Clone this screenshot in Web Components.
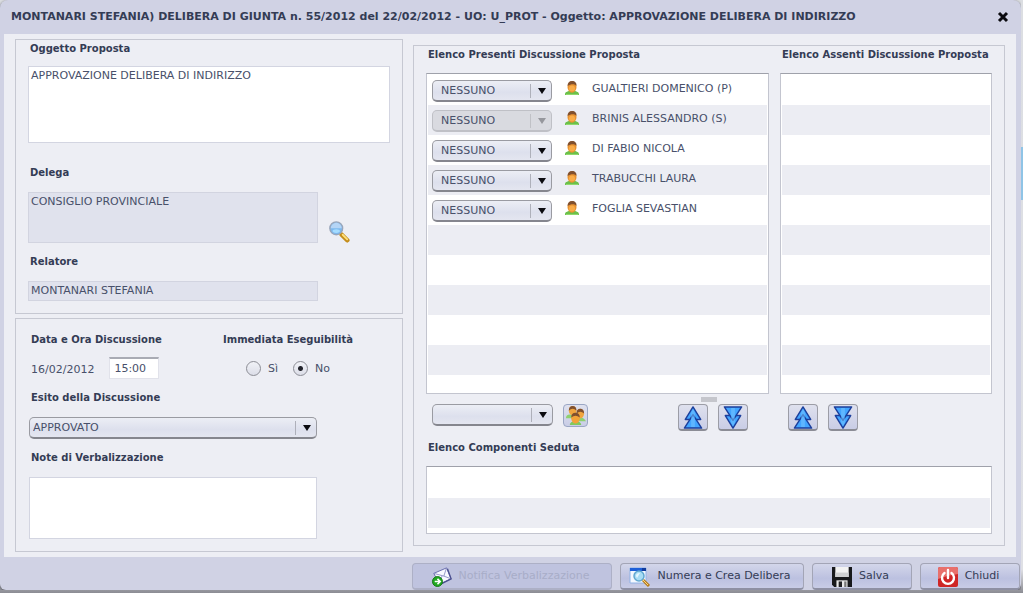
<!DOCTYPE html>
<html lang="it">
<head>
<meta charset="utf-8">
<title>Delibera di Giunta</title>
<style>
  html { min-height: 100%; background: linear-gradient(#8fc4e6, #8fc4e6) right 147px / 2px 53px no-repeat, linear-gradient(#dcdee2 0, #dfe0e5 96%, #8c8d94 100%); }
  body { margin: 0 2px 3px 0; font: 11px/14px "DejaVu Sans", Verdana, sans-serif; color: #48506a; }
</style>
</head>
<body>
<delibera-page></delibera-page>

<script>
const ICONS = {
  close: ['0 0 12 12', '<path d="M2 2l8 8M10 2l-8 8" stroke="#0b0b10" stroke-width="3"/>'],
  arrow: ['0 0 8 6', '<path d="M0 0h8L4 6z" fill="currentColor"/>'],
  search: ['0 0 24 24', '<path d="M15 15l6 6" stroke="#c48d1c" stroke-width="5" stroke-linecap="round"/><path d="M16 15l5 5" stroke="#ffe07c" stroke-width="2" stroke-linecap="round"/><circle cx="9" cy="8" r="7" fill="#7db8ee" stroke="#9aa6ba" stroke-width="1.500"/><path d="M3 8a6 6 0 0 1 12 0z" fill="#b5d5f6"/><ellipse cx="9" cy="11" rx="4" ry="2" fill="#a5dcff"/>'],
  person: ['0 0 14 14', '<path d="M0 14c0-3 1-3 4-4h6c3 1 4 1 4 4z" fill="#6cc04a"/><path d="M1 13.500h12" stroke="#8fd96c"/><ellipse cx="7" cy="6" rx="4.500" ry="5.800" fill="#e8922f"/><ellipse cx="7" cy="7.500" rx="3" ry="3" fill="#f9ad4a"/><path d="M2.600 5C2.400 2 4 0 7 0s5 2 4.400 5C10 2.500 6 2.500 2.600 5z" fill="#80502f"/>'],
  people: ['0 0 22 22', '<path d="M1 14q0-4 4-4h6v4H1zM12 17q0-4 4-4t6 4z" fill="#8ed070"/><ellipse cx="8" cy="6" rx="4" ry="5" fill="#f0a53f"/><path d="M4 6q0-5 4-5t4 5Q8 2 4 6z" fill="#80502f"/><ellipse cx="16" cy="9" rx="4" ry="5" fill="#f0a53f"/><path d="M12 9q0-5 4-5t4 5q-4-4-8 0z" fill="#80502f"/><path d="M5 21q0-4 6-4t6 4z" fill="#7fca5e"/><ellipse cx="11" cy="14" rx="4.500" ry="5.500" fill="#f2a238"/><path d="M6.500 13q0-5 4.500-5t4.500 5q-4.500-3.500-9 0z" fill="#80502f"/>'],
  up: ['0 0 20 24', '<g fill="#42a5ff" stroke="#1c3f9c" stroke-width="1.500" stroke-linejoin="round"><path d="M10 1l8 13H2z"/><path d="M10 9l9 14H1z"/></g><path d="M10 3l2 4v15H8V7z" fill="#7cc8ff" opacity=".5"/>'],
  down: ['0 0 20 24', '<g fill="#42a5ff" stroke="#1c3f9c" stroke-width="1.500" stroke-linejoin="round"><path d="M10 23L2 10h16z"/><path d="M10 15L1 1h18z"/></g><path d="M10 21l-2-4V2h4v15z" fill="#7cc8ff" opacity=".5"/>'],
  mail: ['0 0 22 22', '<path d="M2 7L16 1l5 12L8 19z" fill="#f8f8ff" stroke="#5f63a8"/><path d="M2 7l11 3 3-9M8 19l3-9M21 13l-8-3" fill="none" stroke="#8c90c4"/><path d="M17 2l4 11-12 6" fill="none" stroke="#4d5190" stroke-width="1.500"/><circle cx="6" cy="16" r="5.500" fill="#20a820" stroke="#117311"/><path d="M3 16h5M6 13l3 3-3 3" fill="none" stroke="#fff" stroke-width="1.800"/>'],
  window: ['0 0 22 20', '<path d="M1 1h16v15H1z" fill="#f3f8ff" stroke="#8fb2e6"/><path d="M1 1h16v3H1z" fill="#1d5fd8"/><path d="M13 1h4v3h-4z" fill="#123b9c"/><circle cx="10" cy="9" r="5" fill="#a8ddf5" stroke="#62a8d0" stroke-width="1.500"/><path d="M7 9q0-3 4-3l-3 5z" fill="#e6f7ff"/><path d="M14 13l6 6" stroke="#b57f22" stroke-width="3"/><path d="M14 13l5 5" stroke="#ffd67d"/>'],
  save: ['0 0 18 18', '<path d="M0 0h18v18H2l-2-2z" fill="#18191c"/><path d="M3 0h12v9H3z" fill="#f2f2f2"/><path d="M3 5h12v4H3z" fill="#cfd0d2"/><path d="M4 12h10v6H4z" fill="#e9e9e9"/><path d="M6 13h3v5H6z" fill="#202124"/><path d="M11 13h2v5h-2z" fill="#777"/>'],
  power: ['0 0 20 20', '<rect width="20" height="20" rx="2" fill="#cf2626"/><path d="M0 2q0-2 2-2h16q2 0 2 2v5Q10 8 0 12z" fill="#e8706c"/><path d="M6.500 6a6 6 0 1 0 7 0M10 3v8" fill="none" stroke="#fff" stroke-width="2.400" stroke-linecap="round"/>']
};

const define = (name, css, markup) => {
  customElements.define(name, class extends HTMLElement {
    connectedCallback() {
      if (this.shadowRoot) return;
      const a = (key) => this.getAttribute(key) ?? '';
      this.attachShadow({ mode: 'open' }).innerHTML =
        `<style>*{box-sizing:border-box} :host{display:block} :host([hidden]){display:none} ${css}</style>` +
        markup(a, (key) => this.hasAttribute(key));
    }
  });
};

define('ui-icon', ':host{display:block;flex:none} svg{display:block;width:100%;height:100%}',
  (a) => { const [box, art] = ICONS[a('name')]; return `<svg viewBox="${box}" fill="none" aria-hidden="true">${art}</svg>`; });

define('ui-combo', `
  :host{height:22px}
  div{display:grid;grid-template-columns:1fr 22px;height:100%}
  select{grid-area:1/1/2/3;appearance:none;width:100%;height:100%;margin:0;font:inherit;color:#48506a;
    padding:0 24px 0 var(--combo-indent,8px);border:1px solid #9a9ba2;border-bottom:2px solid #85868e;border-radius:5px;
    background:linear-gradient(#eceef5,#dde0ed 60%,#e4e6f0)}
  span{grid-area:1/2;z-index:1;pointer-events:none;display:grid;place-items:center;margin:4px 0;border-left:1px solid #aeb0ba;color:#0b0b10}
  ui-icon{width:8px;height:6px}
  select:disabled{background:#d9dae0;border-color:#bfc0c6;opacity:1}
  select:disabled+span{color:#96979d;border-color:#c0c1c6}`,
  (a, has) => `<div><select aria-label="${a('label')}" ${has('disabled') ? 'disabled' : ''}><option>${a('value')}</option></select><span><ui-icon name="arrow"></ui-icon></span></div>`);

const LABEL = 'label,.label,h2,legend{display:block;font:bold 10px/14px "DejaVu Sans",Verdana,sans-serif;color:#343c55;margin:0;padding:0 0 0 2px;white-space:nowrap}';

define('ui-field', `
  ${LABEL}
  label{margin-bottom:12px}
  :host([cropped]) label{height:12px;overflow:hidden}
  input,textarea{display:block;width:100%;height:var(--field-height,20px);margin:0;padding:0 2px 2px;font:inherit;color:inherit;
    background:#fff;border:1px solid #d3d5e1;border-radius:0;resize:none;outline:0}
  [readonly]{background:#e0e2ed;border-color:#d2d4e0}
  textarea{padding-top:2px}
  ui-combo{--combo-indent:3px}`,
  (a, has) => {
    const ro = has('readonly') ? 'readonly' : '';
    const body = {
      textarea: () => `<textarea id="c" ${ro}>${a('value')}</textarea>`,
      text: () => `<input id="c" type="text" value="${a('value')}" ${ro}>`,
      select: () => `<ui-combo id="c" label="${a('label')}" value="${a('value')}"></ui-combo>`
    }[a('kind')]();
    return `<label for="c">${a('label')}</label>${body}`;
  });

define('ui-panel', ':host{border:1px solid #c6c8d2;padding:var(--panel-padding,12px);min-width:0}', () => '<slot></slot>');

define('session-time', `
  ${LABEL}
  div{display:flex;align-items:center;gap:15px;margin-top:10px;padding-left:2px}
  time{padding-top:4px}
  input{width:50px;height:22px;margin:0;padding:0 4px;font:inherit;color:inherit;background:#fff;border:1px solid #e1e2ea;border-top:2px solid #a9abb4}`,
  () => `<label for="t">Data e Ora Discussione</label><div><time>16/02/2012</time><input id="t" type="text" value="15:00"></div>`);

define('yes-no', `
  ${LABEL}
  fieldset{border:0;margin:0;padding:0;min-width:0}
  legend{padding:0}
  div{display:flex;gap:15px;margin-top:14px;padding-left:23px}
  .choice{display:flex;align-items:center;gap:7px;font-weight:normal;font-size:11px;color:inherit;padding:0}
  input{appearance:none;width:15px;height:15px;margin:0;border:1px solid #8c8d95;border-radius:50%;background:linear-gradient(#f1f2f7,#dcdee8)}
  input:checked{background:radial-gradient(circle,#22232b 0 2px,transparent 3px),linear-gradient(#f1f2f7,#dcdee8)}`,
  () => `<fieldset><legend>Immediata Eseguibilità</legend><div>
    <label class="choice"><input type="radio" name="e">Sì</label>
    <label class="choice"><input type="radio" name="e" checked>No</label></div></fieldset>`);

define('member-list', `
  ${LABEL}
  h2{margin-bottom:11px}
  ul{list-style:none;margin:0;padding:1px 1px 0;height:var(--list-height,321px);border:1px solid #c3c5cf;border-top-color:#9fa1aa;
    background:repeating-linear-gradient(#fff 0 30px,#ecedf3 30px 60px) content-box,#fff}`,
  (a) => `<h2>${a('caption')}</h2><ul aria-label="${a('caption')}"><slot></slot></ul>`);

define('member-row', `
  li{display:flex;height:30px;list-style:none;padding:5px 0 0 4px}
  ui-combo{width:120px}
  ui-icon{width:14px;height:14px;margin:1px 13px 0}
  span{padding-top:2px;white-space:nowrap}`,
  (a, has) => `<li><ui-combo label="Ruolo" value="NESSUNO" ${has('locked') ? 'disabled' : ''}></ui-combo><ui-icon name="person"></ui-icon><span><slot></slot></span></li>`);

define('tool-button', `
  button{display:grid;place-items:center;width:30px;height:27px;margin:0;padding:0;border:1px solid #9c9da6;border-bottom:2px solid #8b8c95;border-radius:4px;background:linear-gradient(#dfe1ee,#c9cde6)}
  ui-icon{width:20px;height:23px}
  :host([small]) button{width:25px;height:23px;border:1px solid #9aa6c4}
  :host([small]) ui-icon{width:21px;height:21px}
  :host([bare]) button{width:22px;height:22px;border:0;background:none}
  :host([bare]) ui-icon{width:22px;height:22px}`,
  (a) => `<button type="button" aria-label="${a('label')}"><ui-icon name="${a('icon')}"></ui-icon></button>`);

define('action-button', `
  button{display:flex;align-items:center;justify-content:center;gap:6px;width:100%;height:27px;margin:0;padding:0 8px 0 4px;font:inherit;color:#343c55;white-space:nowrap;
    border:1px solid #a3a5b6;border-bottom:2px solid #8e90a3;border-radius:4px;background:linear-gradient(#d3d6ea,#bcc1e0 60%,#c8cce6)}
  ui-icon{width:22px;height:20px;margin-top:2px}
  button:disabled{color:#a8adc8;background:#bfc3df;border-color:#adb0c6}`,
  (a, has) => `<button type="button" ${has('disabled') ? 'disabled' : ''}><ui-icon name="${a('icon')}"></ui-icon><slot></slot></button>`);

define('ui-dialog', `
  :host{background:#d0d2e4;border-radius:8px 8px 6px 6px;box-shadow:0 1px 3px #55565e}
  header{display:flex;align-items:center;justify-content:space-between;height:34px;padding:0 12px 0 11px}
  h1{margin:0;font:bold 11px/14px "DejaVu Sans",Verdana,sans-serif;color:#343c55;white-space:nowrap}
  header button{width:12px;height:12px;padding:0;border:0;background:none}
  main{margin:0 5px 0 4px;padding:5px 11px;background:#edeef4}
  footer{display:flex;justify-content:flex-end;gap:8px;padding:6px 1px 0 0}`,
  (a) => `<header><h1>${a('heading')}</h1><button type="button" aria-label="Chiudi finestra"><ui-icon name="close"></ui-icon></button></header>
    <main><slot></slot></main><footer><slot name="actions"></slot></footer>`);

define('delibera-page', `
  .layout{display:grid;grid-template-columns:388fr 592fr;gap:10px}
  .left{display:grid;gap:4px;min-width:0}
  .proposal{--panel-padding:2px 12px 12px}
  .session{--panel-padding:14px 13px 12px}
  .people{--panel-padding:2px 12px 11px;margin:6px 0}
  .short{width:80%}
  .object{--field-height:77px}
  .delegate{display:flex;align-items:flex-end;gap:10px;margin:23px 0 12px}
  .delegate ui-field{--field-height:51px}
  .when{display:grid;grid-template-columns:194px 1fr}
  .stack{display:grid;gap:12px}
  .notes{--field-height:62px}
  .columns{display:grid;grid-template-columns:minmax(0,343fr) minmax(0,212fr);column-gap:11px}
  .grip{width:16px;height:5px;margin:3px auto 2px;background:#c5c6cc}
  .tools{display:flex;gap:10px;height:26px}
  .present{padding:0 21px 0 6px}
  .absent{padding-left:8px}
  .tools ui-combo{width:121px}
  .push{margin-left:auto}
  .seated{--list-height:68px;margin-top:11px}
  action-button{width:100px}
  .wide{width:200px}
  .medium{width:184px}`,
  () => `<ui-dialog heading="MONTANARI STEFANIA) DELIBERA DI GIUNTA n. 55/2012 del 22/02/2012 - UO: U_PROT - Oggetto: APPROVAZIONE DELIBERA DI INDIRIZZO">
    <div class="layout">
      <div class="left">
        <ui-panel class="proposal">
          <ui-field class="object" cropped kind="textarea" label="Oggetto Proposta" value="APPROVAZIONE DELIBERA DI INDIRIZZO"></ui-field>
          <div class="delegate">
            <ui-field class="short" readonly kind="textarea" label="Delega" value="CONSIGLIO PROVINCIALE"></ui-field>
            <tool-button bare icon="search" label="Cerca delega"></tool-button>
          </div>
          <ui-field class="short" readonly kind="text" label="Relatore" value="MONTANARI STEFANIA"></ui-field>
        </ui-panel>
        <ui-panel class="session">
          <div class="stack">
            <div class="when"><session-time></session-time><yes-no></yes-no></div>
            <ui-field class="short" kind="select" label="Esito della Discussione" value="APPROVATO"></ui-field>
            <ui-field class="short notes" kind="textarea" label="Note di Verbalizzazione"></ui-field>
          </div>
        </ui-panel>
      </div>
      <ui-panel class="people">
        <div class="columns">
          <member-list caption="Elenco Presenti Discussione Proposta">
            <member-row>GUALTIERI DOMENICO (P)</member-row>
            <member-row locked>BRINIS ALESSANDRO (S)</member-row>
            <member-row>DI FABIO NICOLA</member-row>
            <member-row>TRABUCCHI LAURA</member-row>
            <member-row>FOGLIA SEVASTIAN</member-row>
          </member-list>
          <member-list caption="Elenco Assenti Discussione Proposta"></member-list>
        </div>
        <div class="grip"></div>
        <div class="columns">
          <div class="tools present">
            <ui-combo label="Gruppo" value=""></ui-combo>
            <tool-button small icon="people" label="Aggiungi gruppo"></tool-button>
            <tool-button class="push" icon="up" label="Sposta presenti su"></tool-button>
            <tool-button icon="down" label="Sposta presenti giù"></tool-button>
          </div>
          <div class="tools absent">
            <tool-button icon="up" label="Sposta assenti su"></tool-button>
            <tool-button icon="down" label="Sposta assenti giù"></tool-button>
          </div>
        </div>
        <member-list class="seated" caption="Elenco Componenti Seduta"></member-list>
      </ui-panel>
    </div>
    <action-button slot="actions" class="wide" disabled icon="mail">Notifica Verbalizzazione</action-button>
    <action-button slot="actions" class="medium" icon="window">Numera e Crea Delibera</action-button>
    <action-button slot="actions" icon="save">Salva</action-button>
    <action-button slot="actions" icon="power">Chiudi</action-button>
  </ui-dialog>`);
</script>
</body>
</html>
